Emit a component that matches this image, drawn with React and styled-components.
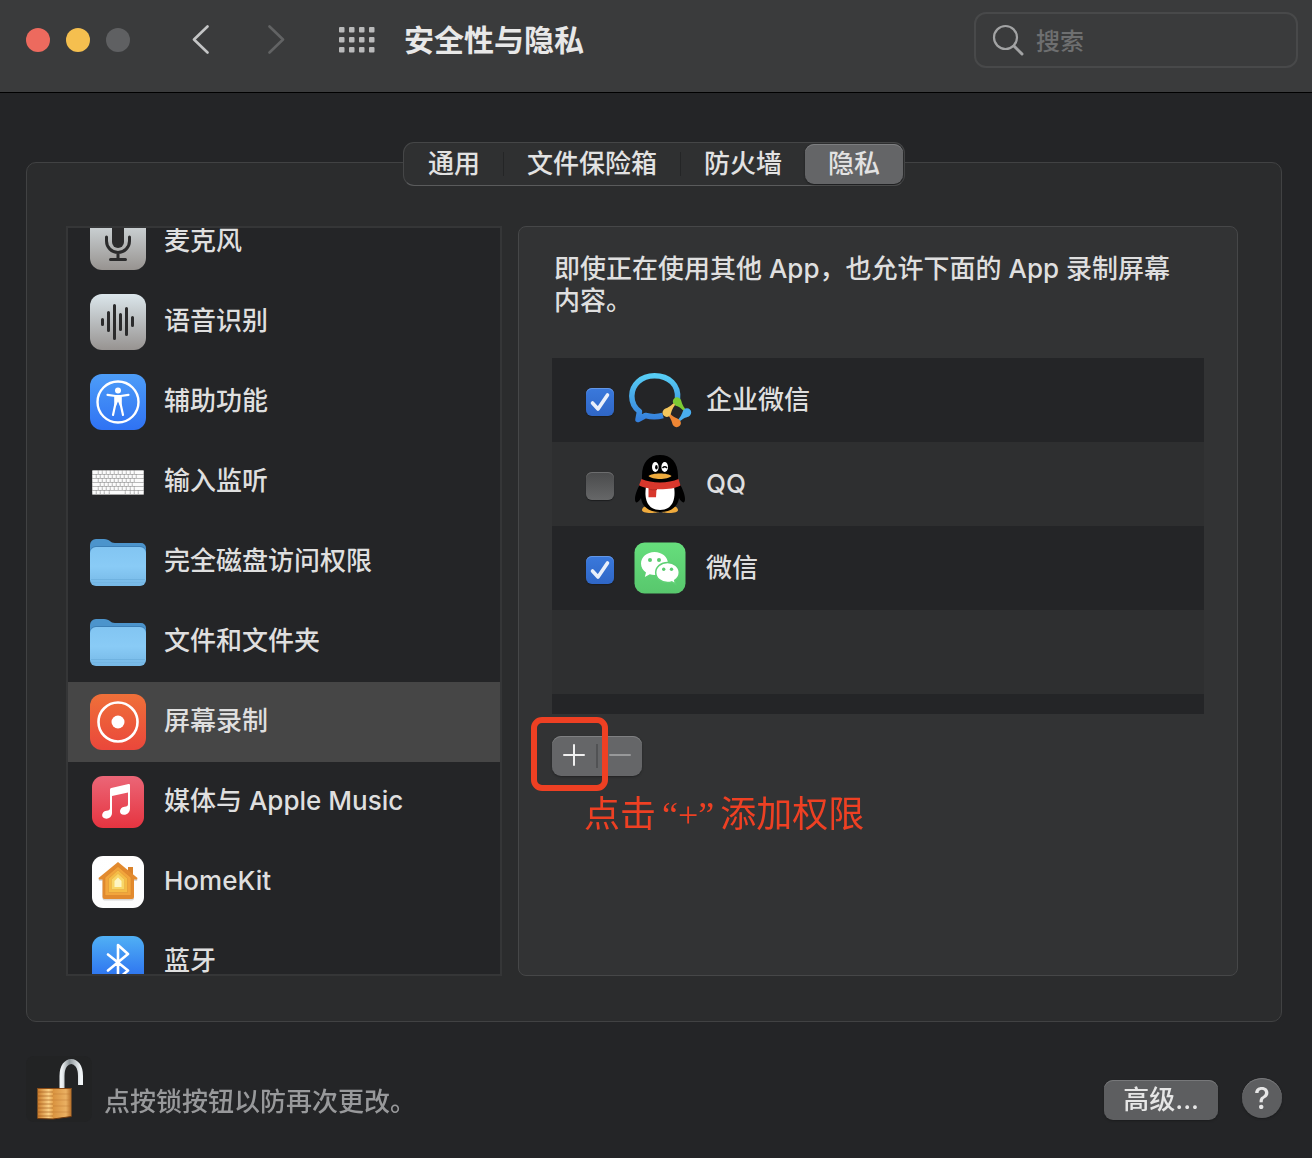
import React, { useLayoutEffect, useRef, useState } from "react";
import styled, { createGlobalStyle } from "styled-components";

const GlobalStyle = createGlobalStyle`
  *, *::before, *::after { box-sizing: border-box; }
  body {
    margin: 0;
    background: #242527;
    color: #dfdfdf;
    font-family: Inter, "Noto Sans CJK SC", sans-serif;
    font-size: 26px;
    line-height: 32px;
  }
  button, input { font: inherit; color: inherit; }
  h1, p, ul { margin: 0; padding: 0; }
  ul { list-style: none; }
  svg { display: block; flex: none; }
`;

/* ---------- Window frame ---------- */

const Window = styled.div`
  display: flex;
  flex-direction: column;
  height: 100vh;
  min-height: 720px;
  min-width: 960px;
`;

const Toolbar = styled.header`
  display: flex;
  align-items: center;
  padding: 12px 14px 24px 26px;
  background: #3a3b3c;
  border-bottom: 1px solid #000;
`;

const TrafficLights = styled.div`
  display: flex;
  gap: 16px;
`;

const Light = styled.button`
  width: 24px;
  height: 24px;
  padding: 0;
  border: 0;
  border-radius: 50%;
  background: ${(p) => p.$color};
`;

const NavButtons = styled.nav`
  display: flex;
  align-items: center;
  margin-left: 59px;
`;

const IconButton = styled.button`
  display: grid;
  place-items: center;
  width: ${(p) => p.$width}px;
  height: 40px;
  padding: 0;
  border: 0;
  background: none;
`;

const Title = styled.h1`
  flex: 1;
  margin-left: 29px;
  font-size: 30px;
  line-height: 40px;
  font-weight: 700;
  color: #e8e8e8;
`;

const SearchField = styled.label`
  display: flex;
  align-items: center;
  gap: 12px;
  width: 324px;
  height: 56px;
  padding: 0 16px;
  border: 2px solid #48494a;
  border-radius: 12px;
`;

const SearchInput = styled.input`
  flex: 1;
  min-width: 0;
  padding: 4px 0 0;
  border: 0;
  outline: 0;
  background: none;
  font-size: 24px;
  line-height: 32px;
  font-weight: 500;
  &::placeholder { color: #6e6f70; opacity: 1; }
`;

/* ---------- Tabs and panel ---------- */

const Content = styled.main`
  display: flex;
  flex-direction: column;
  flex: 1;
  min-height: 0;
  padding: 49px 30px 0 26px;
`;

const Tabs = styled.div`
  z-index: 1;
  display: flex;
  align-self: center;
  height: 44px;
  margin-bottom: -24px;
  padding: 1px;
  border: 1px solid #454647;
  border-bottom-color: #5a5b5c;
  border-radius: 11px;
  background: #2f3031;
`;

const Tab = styled.button`
  padding: 0 23px;
  border: 0;
  border-radius: 9px;
  font-weight: 500;
  color: #e2e2e2;
  background: ${(p) => (p.$active ? "#646567" : "none")};
  box-shadow: ${(p) => (p.$active ? "inset 0 1px 0 #7d7e80, 0 1px 2px #1b1c1d" : "none")};
`;

const TabDivider = styled.span`
  width: 1px;
  margin: 8px 0;
  background: #242526;
`;

const Panel = styled.section`
  display: grid;
  grid-template-columns: 436fr 720fr;
  grid-template-rows: minmax(0, 1fr);
  gap: 16px;
  flex: 1;
  min-height: 0;
  padding: 63px 43px 45px 39px;
  border: 1px solid #414243;
  border-radius: 10px;
  background: #2b2c2d;
`;

/* ---------- Category list ---------- */

const CategoryList = styled.ul`
  overflow-y: auto;
  scrollbar-width: none;
  border: 2px solid #353637;
  background: #242527;
`;

const Category = styled.button`
  display: flex;
  align-items: center;
  gap: 18px;
  width: 100%;
  height: 80px;
  padding: 0 22px;
  border: 0;
  text-align: left;
  font-weight: 500;
  background: ${(p) => (p.$selected ? "#464646" : "none")};
`;

const CategoryLabel = styled.span`
  padding-bottom: 2px;
`;

/* ---------- Permission detail ---------- */

const Detail = styled.section`
  padding: 26px 33px;
  border: 1px solid #464748;
  border-radius: 8px;
  background: #323334;
`;

const Description = styled.p`
  padding: 0 2px;
  margin-bottom: 41px;
  font-weight: 500;
`;

const Unbroken = styled.span`
  white-space: nowrap;
`;

const AppList = styled.ul`
  height: 356px;
  overflow: hidden;
`;

const AppRow = styled.li`
  height: 84px;
  background: #242527;
  &:nth-child(even) { background: #2e2f30; }
`;

const AppLabel = styled.label`
  display: flex;
  align-items: center;
  gap: 14px;
  height: 100%;
  padding: 0 34px;
  font-weight: 500;
`;

const CheckWrap = styled.span`
  display: grid;
  width: 28px;
  margin-top: 4px;
  & > * { grid-area: 1 / 1; }
  & > svg { pointer-events: none; }
`;

const CheckInput = styled.input`
  appearance: none;
  width: 28px;
  height: 28px;
  margin: 0;
  border-radius: 6px;
  background: linear-gradient(#4a4b4c, #666768);
  box-shadow: inset 0 1px 0 #6c6d6e, 0 1px 1px #1c1d1e;
  &:checked {
    background: linear-gradient(#3a79dc, #2f66c6);
    box-shadow: inset 0 1px 0 #6397e6, 0 1px 1px #1c1d1e;
  }
`;

const EditButtons = styled.div`
  position: relative;
  display: flex;
  width: 90px;
  height: 40px;
  margin-top: 22px;
  border-radius: 9px;
  background: #656668;
  box-shadow: inset 0 1px 0 #7f8082, 0 1px 2px #222324;
`;

const EditButton = styled.button`
  display: grid;
  place-items: center;
  flex: 1;
  padding: 0 0 2px;
  border: 0;
  background: none;
  color: ${(p) => (p.disabled ? "#98999a" : "#f0f0f0")};
`;

const EditDivider = styled.span`
  width: 2px;
  margin: 8px 0;
  background: #515254;
`;

const Highlight = styled.span`
  position: absolute;
  top: -19px;
  left: -21px;
  width: 77px;
  height: 74px;
  border: 6px solid #ee4023;
  border-radius: 11px;
  pointer-events: none;
`;

const Note = styled.p`
  margin-top: 16px;
  padding-left: 32px;
  font-size: 36px;
  line-height: 44px;
  color: #ee4023;
`;

const Quoted = styled.q`
  margin: 0 6px;
  font-family: "Liberation Serif", serif;
  quotes: none;
`;

/* ---------- Footer ---------- */

const Footer = styled.footer`
  display: flex;
  align-items: flex-start;
  padding: 34px 30px 36px 26px;
`;

const LockButton = styled.button`
  width: 66px;
  height: 66px;
  padding: 0;
  border: 0;
  border-radius: 8px;
  background: #222324;
`;

const LockText = styled.p`
  flex: 1;
  padding: 30px 0 0 12px;
  color: #98999b;
  font-weight: 500;
`;

const PushButton = styled.button`
  height: 40px;
  margin-top: 24px;
  padding: 0 19px;
  border: 0;
  border-radius: 9px;
  font-weight: 500;
  color: #e6e6e6;
  background: #5d5e60;
  box-shadow: inset 0 1px 0 #77787a, 0 1px 2px #1b1c1d;
`;

const HelpButton = styled(PushButton)`
  width: 40px;
  margin: 22px 0 0 24px;
  padding: 0;
  border-radius: 50%;
  font-size: 30px;
`;

/* ---------- Drawings ---------- */

const Tile = ({ id, from, to, small, children }) => (
  <svg width="56" height="56" viewBox="0 0 56 56" aria-hidden="true">
    <defs>
      <linearGradient id={id} x1="0" y1="0" x2="0" y2="1">
        <stop offset="0" stopColor={from} />
        <stop offset="1" stopColor={to} />
      </linearGradient>
    </defs>
    {small ? (
      <rect x="2" y="2" width="52" height="52" rx="11" fill={`url(#${id})`} />
    ) : (
      <rect width="56" height="56" rx="12" fill={`url(#${id})`} />
    )}
    {children}
  </svg>
);

const MicIcon = () => (
  <Tile id="mic" from="#d9e2e6" to="#979390">
    <rect x="22" y="6" width="12" height="28" rx="6" fill="#2b2b2c" />
    <path d="M16.5 23v4a11.5 11.5 0 0 0 23 0v-4M28 39v6M20.500 45.500h15" fill="none" stroke="#2b2b2c" strokeWidth="3" strokeLinecap="round" />
  </Tile>
);

const SpeechIcon = () => (
  <Tile id="speech" from="#dbe6eb" to="#979391">
    <path d="M12.500 25.500v5M18.500 18.500v18M24.500 11.500v33M30.500 20.500v15M36.500 14.500v26M42.500 23.500v8" fill="none" stroke="#2b2b2c" strokeWidth="3" strokeLinecap="round" />
  </Tile>
);

const AccessIcon = () => (
  <Tile id="access" from="#4d9df8" to="#2f72f3">
    <circle cx="28" cy="28" r="20.500" fill="none" stroke="#fff" strokeWidth="2.400" />
    <circle cx="28" cy="16.500" r="3" fill="#fff" />
    <path d="M17.500 20.800 25.500 22v7.500L23 41M38.500 20.800 30.500 22v7.500L33 41" fill="none" stroke="#fff" strokeWidth="2.200" strokeLinecap="round" strokeLinejoin="round" />
    <path d="M24.500 21h7v11h-1.500L28 27.500 26 32h-1.500z" fill="#fff" />
  </Tile>
);

const KeyboardIcon = () => {
  const rows = [
    [6, 4, 4, 4, 4, 4, 4, 4, 4, 4, 10],
    [4, 4, 4, 4, 4, 4, 4, 4, 4, 4, 4, 8],
    [6, 4, 4, 4, 4, 4, 4, 4, 4, 4, 10],
    [8, 4, 4, 4, 4, 4, 4, 4, 4, 12],
    [6, 4, 4, 4, 4, 4, 4, 4, 4, 4, 10],
    [4, 4, 4, 5, 16, 5, 4, 4, 6],
  ];
  return (
    <svg width="56" height="56" viewBox="0 0 56 56" aria-hidden="true">
      <rect x="2" y="16" width="52" height="25" rx="1" fill="#a4a4a4" />
      {rows.map((row, r) => {
        let x = 2.6;
        return row.map((w, i) => {
          const start = x;
          x += w;
          const width = (i === row.length - 1 ? 54.2 : x) - start - 0.8;
          return <rect key={`${r}-${i}`} x={start} y={16.8 + r * 4} width={width} height="3.2" rx="0.500" fill="#fbfbfb" />;
        });
      })}
    </svg>
  );
};

const FolderIcon = ({ id }) => (
  <svg width="56" height="56" viewBox="0 0 56 56" aria-hidden="true">
    <defs>
      <linearGradient id={id} x1="0" y1="0" x2="0" y2="1">
        <stop offset="0" stopColor="#82c5f2" />
        <stop offset="0.500" stopColor="#89cbf6" />
        <stop offset="1" stopColor="#76b8e6" />
      </linearGradient>
    </defs>
    <path d="M0 11a6 6 0 0 1 6-6h8c6 0 6 4 11 4h26a5 5 0 0 1 5 5v12H0z" fill="#4c94cc" />
    <rect y="12" width="56" height="28" rx="6" fill="#3c7fb6" />
    <rect y="13" width="56" height="39" rx="6" fill={`url(#${id})`} />
    <path d="M1 45.500h54" stroke="#6fb2e0" />
    <path d="M1 48.500h54" stroke="#70b1de" strokeWidth="0.500" />
  </svg>
);

const RecordIcon = () => (
  <Tile id="record" from="#ef7039" to="#ea473b">
    <circle cx="28" cy="28" r="19.500" fill="none" stroke="#fff" strokeWidth="2.600" />
    <circle cx="28" cy="28" r="6.500" fill="#fff" />
  </Tile>
);

const MusicIcon = () => (
  <Tile id="music" from="#eb6677" to="#e63440" small>
    <path d="M20 15.500Q20 14.200 21.300 13.900L38.500 10Q40 9.700 40 11v23.500c0 3.500-2.600 6.300-6 6.300-5.500 0-5.300-7.300.5-8.100 2.500-.4 3.500-.7 3.500-2.700V18.500L22 22v17c0 3.500-2.800 5.700-5.600 5.700-5.800 0-5.500-7 0-7.900 2.500-.5 3.600-.8 3.600-2.800z" fill="#fff" />
  </Tile>
);

const HOUSE = "M28 8 47.500 24l-.5 1.500h-3V43q0 2-2 2H14.500q-2 0-2-2V25.500H9L8.500 24z";

const HomeIcon = () => (
  <Tile id="home" from="#ffffff" to="#fdfdfd" small>
    <path d={HOUSE} fill="#000" opacity="0.150" transform="translate(0 1.500)" />
    <path d="M38 13h5v12h-5z" fill="#d9822b" />
    <path d={HOUSE} fill="#e28a2e" />
    <path d="M28 12.500 41 23.500V41.500H15V23.500z" fill="#f2a53c" stroke="#d8832b" strokeWidth="0.600" />
    <path d="M28 16 37.500 24.500v14h-19v-14z" fill="#f5bc45" stroke="#dd9737" strokeWidth="0.600" />
    <path d="M28 19.500 34.500 25.500v10h-13v-10z" fill="#f8d667" stroke="#e8b04a" strokeWidth="0.600" />
    <path d="M28 23.500 31.500 27v6h-7v-6z" fill="#fdf5c4" />
  </Tile>
);

const BluetoothIcon = () => (
  <Tile id="bluetooth" from="#50b0f5" to="#2463ee" small>
    <path d="M18 20.500 38 36.500 28 45V11l10 9L18 36.500" fill="none" stroke="#fff" strokeWidth="2.600" strokeLinecap="round" strokeLinejoin="round" />
  </Tile>
);

const DROP = "M0-4.200A4.200 4.200 0 0 1 4.200 0C4.200 3 1.800 4 1.300 10.500A1.300 1.300 0 0 1-1.300 10.500C-1.800 4-4.200 3-4.200 0A4.200 4.200 0 0 1 0-4.200z";

const WeComIcon = () => (
  <svg width="64" height="64" viewBox="0 0 64 64" aria-hidden="true">
    <defs>
      <linearGradient id="wecom" x1="0" y1="0" x2="0" y2="1">
        <stop offset="0" stopColor="#57cdf5" />
        <stop offset="1" stopColor="#3580dc" />
      </linearGradient>
    </defs>
    <path d="M49.500 31C51 17 41 7.800 26.500 7.800 13 7.800 3.800 17 3.800 28c0 7 3 12 7.700 15.500L10 51.500l7.500-4c6 1.600 11 1.700 17.500 0" fill="none" stroke="url(#wecom)" strokeWidth="5.500" strokeLinejoin="round" />
    <path transform="translate(49 33.500) rotate(-42)" d={DROP} fill="#7ccb34" />
    <path transform="translate(59 44.500) rotate(45)" d={DROP} fill="#49aef0" />
    <path transform="translate(48.700 55) rotate(138)" d={DROP} fill="#ee8634" />
    <path transform="translate(38.700 44.700) rotate(-139)" d={DROP} fill="#f3c65c" />
  </svg>
);

const QQIcon = () => (
  <svg width="64" height="64" viewBox="0 0 64 64" aria-hidden="true">
    <path d="M14 58c0-3 5-5 9-5h18c4 0 9 2 9 5 0 2-3 3-9 3-5 0-7-1-9-1s-4 1-9 1c-6 0-9-1-9-3z" fill="#efab3d" />
    <path d="M14 24C14 10 21 3 32 3s18 7 18 21v5c4 6 7 13 7 18 0 6-4 3-6-1-1 8-7 14-19 14S14 54 13 46c-2 4-6 7-6 1 0-5 3-12 7-18z" fill="#000" />
    <path d="M18 35h28c2 11-1 23-14 23S16 46 18 35z" fill="#fff" />
    <path d="M13.500 27c10 4.500 27 4.500 37 0l2 6.500c-6 3-12 4-24 3.800l-.500 8h-7.500v-9c-4-.700-7.500-1.700-9.500-3z" fill="#d8372c" />
    <path d="M21 37c2 1 5 1 8 .5" stroke="#b52b22" fill="none" />
    <ellipse cx="27.300" cy="15" rx="3.300" ry="5" fill="#fff" />
    <ellipse cx="36.700" cy="15" rx="3.300" ry="5" fill="#fff" />
    <ellipse cx="28.400" cy="15.300" rx="1.300" ry="2.200" fill="#000" />
    <path d="M34.500 16q2.300-2.500 4.500 0" stroke="#000" strokeWidth="1.400" fill="none" />
    <path d="M20.500 24c3-3.500 20-3.500 23 0-4 4-19 4-23 0z" fill="#efab3d" />
  </svg>
);

const WeChatIcon = () => (
  <svg width="64" height="64" viewBox="0 0 64 64" aria-hidden="true">
    <defs>
      <linearGradient id="wechat" x1="0" y1="0" x2="0" y2="1">
        <stop offset="0" stopColor="#66de7c" />
        <stop offset="1" stopColor="#58c76d" />
      </linearGradient>
    </defs>
    <rect x="6.500" y="6.500" width="51" height="51" rx="10" fill="url(#wechat)" />
    <path d="M26.500 16C19 16 13 21 13 27.500c0 4 2 7 5 9l-1.200 4.500 5-2.700c1.500.4 3 .7 4.700.7 7.500 0 13.500-5 13.500-11.500S34 16 26.500 16z" fill="#fff" />
    <path d="M39.500 26.500c-6.500 0-11.800 4.300-11.800 10s5.300 10 11.800 10c1.500 0 2.900-.2 4.200-.6l4 2.300-1-3.900c2.800-1.800 4.600-4.600 4.600-7.800 0-5.700-5.300-10-11.800-10z" fill="#fff" stroke="#5fd175" strokeWidth="1.500" />
    <g fill="#5bcb70">
      <circle cx="22" cy="24" r="2" />
      <circle cx="31" cy="24" r="2" />
      <circle cx="35.700" cy="33.300" r="1.700" />
      <circle cx="43.500" cy="33.300" r="1.700" />
    </g>
  </svg>
);

const LockIcon = () => (
  <svg width="66" height="66" viewBox="0 0 66 66" aria-hidden="true">
    <defs>
      <linearGradient id="shackle" x1="0" y1="0" x2="1" y2="0">
        <stop offset="0" stopColor="#eef2f4" />
        <stop offset="0.400" stopColor="#8d9599" />
        <stop offset="1" stopColor="#f1f5f7" />
      </linearGradient>
      <linearGradient id="brassFront" x1="0" y1="0" x2="1" y2="0">
        <stop offset="0" stopColor="#c87a2a" />
        <stop offset="0.700" stopColor="#fbd084" />
        <stop offset="1" stopColor="#e39f48" />
      </linearGradient>
      <linearGradient id="brassSide" x1="0" y1="0" x2="1" y2="0">
        <stop offset="0" stopColor="#d9933f" />
        <stop offset="0.700" stopColor="#eab062" />
        <stop offset="1" stopColor="#b56d27" />
      </linearGradient>
    </defs>
    <path d="M36 33V20C36 .5 54.500 .5 54.500 20v9" fill="none" stroke="url(#shackle)" strokeWidth="5" />
    <path d="M11.500 32h16v31l-16-.500z" fill="url(#brassFront)" />
    <path d="M27 32h18.500v28.500L27 63z" fill="url(#brassSide)" />
    <path d="M11.500 36H27M11.500 40H27M11.500 44H27M11.500 48H27M11.500 52H27M11.500 56H27M11.500 60H27" stroke="#9c5519" strokeWidth="1" opacity="0.600" />
    <path d="M27 38h18M27 44h18M27 50h18M27 56h18" stroke="#b87430" strokeWidth="0.700" opacity="0.600" />
    <path d="M11.500 32.500h34" stroke="#8a4b16" />
    <path d="M11.500 62.500 27 63l18.500-2.500" stroke="#6e390e" fill="none" />
  </svg>
);

const Chevron = ({ back }) => (
  <svg width="20" height="30" viewBox="0 0 20 30" aria-hidden="true">
    <path d={back ? "M16.500 1.500 3 14.500 16.500 27.500" : "M3.500 1.500 17 14.500 3.500 27.500"} fill="none" stroke={back ? "#c4c5c6" : "#626364"} strokeWidth="2.600" strokeLinecap="round" strokeLinejoin="round" />
  </svg>
);

const GridIcon = () => (
  <svg width="36" height="26" viewBox="0 0 36 26" aria-hidden="true">
    {[0, 10, 20].map((y) =>
      [0, 10, 20, 30].map((x) => <rect key={`${x}-${y}`} x={x} y={y} width="5.500" height="5.500" rx="1" fill="#b9babb" />)
    )}
  </svg>
);

const SearchIcon = () => (
  <svg width="32" height="32" viewBox="0 0 32 32" aria-hidden="true">
    <circle cx="13.500" cy="13.500" r="11.500" fill="none" stroke="#a2a3a4" strokeWidth="2.200" />
    <path d="m22 22 8 8" stroke="#a2a3a4" strokeWidth="3" strokeLinecap="round" />
  </svg>
);

const CheckMark = () => (
  <svg width="28" height="28" viewBox="0 0 28 28" aria-hidden="true">
    <path d="m6.500 15 5.500 6L21.500 7" fill="none" stroke="#e9effa" strokeWidth="3.600" strokeLinecap="round" strokeLinejoin="round" />
  </svg>
);

const PlusMinus = ({ plus }) => (
  <svg width="22" height="22" viewBox="0 0 22 22" aria-hidden="true">
    <path d={plus ? "M1 11h20M11 1v20" : "M1 11h20"} stroke="currentColor" strokeWidth="2" strokeLinecap="round" />
  </svg>
);

/* ---------- Data ---------- */

const TABS = ["通用", "文件保险箱", "防火墙", "隐私"];

const CATEGORIES = [
  { label: "麦克风", icon: <MicIcon /> },
  { label: "语音识别", icon: <SpeechIcon /> },
  { label: "辅助功能", icon: <AccessIcon /> },
  { label: "输入监听", icon: <KeyboardIcon /> },
  { label: "完全磁盘访问权限", icon: <FolderIcon id="disk" /> },
  { label: "文件和文件夹", icon: <FolderIcon id="files" /> },
  { label: "屏幕录制", icon: <RecordIcon /> },
  { label: "媒体与 Apple Music", icon: <MusicIcon /> },
  { label: "HomeKit", icon: <HomeIcon /> },
  { label: "蓝牙", icon: <BluetoothIcon /> },
];

const APPS = [
  { id: "wecom", label: "企业微信", icon: <WeComIcon />, allowed: true },
  { id: "qq", label: "QQ", icon: <QQIcon />, allowed: false },
  { id: "wechat", label: "微信", icon: <WeChatIcon />, allowed: true },
];

const INITIAL_SCROLL = 26;

export default function App() {
  const [tab, setTab] = useState("隐私");
  const [category, setCategory] = useState("屏幕录制");
  const [allowed, setAllowed] = useState(() => Object.fromEntries(APPS.map((a) => [a.id, a.allowed])));
  const listRef = useRef(null);

  useLayoutEffect(() => {
    listRef.current.scrollTop = INITIAL_SCROLL;
  }, []);

  return (
    <Window lang="zh-CN">
      <GlobalStyle />
      <Toolbar>
        <TrafficLights>
          <Light $color="#ed6a5e" aria-label="关闭" />
          <Light $color="#f5bf4f" aria-label="最小化" />
          <Light $color="#5f6062" aria-label="缩放" />
        </TrafficLights>
        <NavButtons>
          <IconButton $width={24} aria-label="后退"><Chevron back /></IconButton>
          <IconButton $width={126} aria-label="前进"><Chevron /></IconButton>
          <IconButton $width={36} aria-label="显示全部"><GridIcon /></IconButton>
        </NavButtons>
        <Title>安全性与隐私</Title>
        <SearchField>
          <SearchIcon />
          <SearchInput type="search" placeholder="搜索" aria-label="搜索" />
        </SearchField>
      </Toolbar>

      <Content>
        <Tabs role="tablist">
          {TABS.map((name, i) => (
            <React.Fragment key={name}>
              {(i === 1 || i === 2) && <TabDivider />}
              <Tab role="tab" aria-selected={tab === name} $active={tab === name} onClick={() => setTab(name)}>
                {name}
              </Tab>
            </React.Fragment>
          ))}
        </Tabs>

        <Panel>
          <CategoryList ref={listRef}>
            {CATEGORIES.map(({ label, icon }) => (
              <li key={label}>
                <Category $selected={category === label} onClick={() => setCategory(label)}>
                  {icon}
                  <CategoryLabel>{label}</CategoryLabel>
                </Category>
              </li>
            ))}
          </CategoryList>

          <Detail>
            <Description>
              即使正在使用其他 App，也允许下面的 App 录制屏幕<Unbroken>内容。</Unbroken>
            </Description>
            <AppList>
              {APPS.map(({ id, label, icon }) => (
                <AppRow key={id}>
                  <AppLabel>
                    <CheckWrap>
                      <CheckInput
                        type="checkbox"
                        checked={allowed[id]}
                        onChange={(e) => setAllowed({ ...allowed, [id]: e.target.checked })}
                      />
                      {allowed[id] && <CheckMark />}
                    </CheckWrap>
                    {icon}
                    {label}
                  </AppLabel>
                </AppRow>
              ))}
              <AppRow />
              <AppRow />
            </AppList>
            <EditButtons>
              <EditButton aria-label="添加"><PlusMinus plus /></EditButton>
              <EditDivider />
              <EditButton aria-label="移除" disabled><PlusMinus /></EditButton>
              <Highlight />
            </EditButtons>
            <Note>点击<Quoted>“+”</Quoted>添加权限</Note>
          </Detail>
        </Panel>
      </Content>

      <Footer>
        <LockButton aria-label="锁定"><LockIcon /></LockButton>
        <LockText>点按锁按钮以防再次更改。</LockText>
        <PushButton>高级...</PushButton>
        <HelpButton aria-label="帮助">?</HelpButton>
      </Footer>
    </Window>
  );
}
